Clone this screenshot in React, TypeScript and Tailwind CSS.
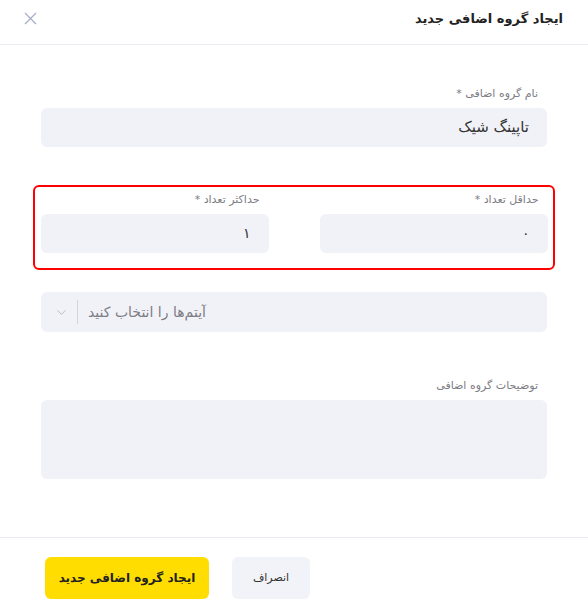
import { ChevronDown } from 'lucide-react'

const font = "font-['DejaVu_Sans',sans-serif]"

const Label = ({ text }: { text: string }) => (
  <div className="h-4 pr-[9px] text-[11px] leading-4 text-[#7c7c84]">{text}</div>
)

const Field = ({ value, className = '' }: { value?: string; className?: string }) => (
  <div
    className={`mt-[6px] flex h-[39px] items-center rounded-md bg-[#f1f2f7] pr-[18px] text-[14px] text-[#333] ${className}`}
  >
    {value}
  </div>
)

export default function App() {
  return (
    <div dir="rtl" className={`flex h-[610px] w-[588px] flex-col bg-white ${font}`}>
      <header className="flex h-[45px] shrink-0 items-center justify-between border-b border-[#e9ebf1] pl-[24px] pr-[25px] pb-[7px]">
        <h1 className="text-[13px] font-bold text-[#222]">ایجاد گروه اضافی جدید</h1>
        <svg width="13" height="13" viewBox="0 0 13 13" className="text-[#a6aecb]">
          <path d="M1 1L12 12M12 1L1 12" stroke="currentColor" strokeWidth="1.3" />
        </svg>
      </header>

      <main className="flex-1 px-[41px] pt-[41px]">
        <Label text="نام گروه اضافی *" />
        <Field value="تاپینگ شیک" className="text-[15px]" />

        <div className="-mx-2 mt-[38px] rounded-md border-[2.5px] border-[#ff0000] px-[5.5px] pb-[15px] pt-[5px]">
          <div className="grid grid-cols-2 gap-[51px]">
            <div>
              <Label text="حداقل تعداد *" />
              <Field value="۰" />
            </div>
            <div>
              <Label text="حداکثر تعداد *" />
              <Field value="۱" />
            </div>
          </div>
        </div>

        <div
          dir="ltr"
          className="mt-[22px] flex h-10 items-center rounded-md bg-[#f1f2f7] pl-[13px] text-[14px] text-[#7d7d85]"
        >
          <ChevronDown size={15} strokeWidth={1.6} className="text-[#b9bcc6]" />
          <span className="ml-[8px] h-6 w-px bg-[#d3d5dc]" />
          <span dir="rtl" className="ml-[10px]">
            آیتم‌ها را انتخاب کنید
          </span>
        </div>

        <div className="mt-[46px]">
          <Label text="توضیحات گروه اضافی" />
          <div className="mt-[6px] h-[79px] rounded-md bg-[#f1f2f7]" />
        </div>
      </main>

      <footer className="flex h-[73px] shrink-0 items-start justify-end gap-[23px] border-t border-[#e9ebf1] pl-[45px] pt-[19px]">
        <button className="flex h-[42px] w-[78px] items-center justify-center rounded-md bg-[#f2f3f8] text-[11px] text-[#333]">
          انصراف
        </button>
        <button className="flex h-[42px] w-[164px] items-center justify-center rounded-md bg-[#ffdd00] text-[12px] font-bold text-[#222]">
          ایجاد گروه اضافی جدید
        </button>
      </footer>
    </div>
  )
}
